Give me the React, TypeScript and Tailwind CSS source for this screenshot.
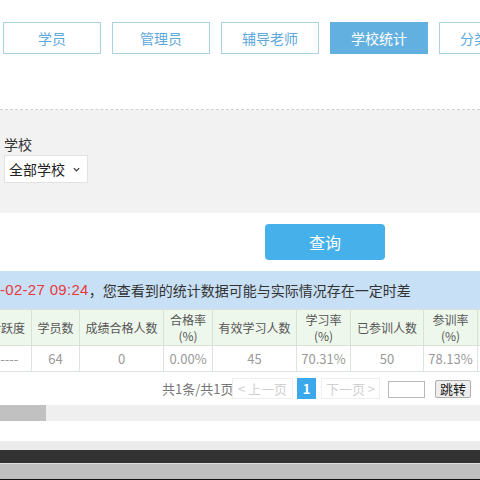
const TABS = ["学员", "管理员", "辅导老师", "学校统计", "分类统计"];

const HEADERS: { label: string; sub?: string; w: string }[] = [
  { label: "活跃度", w: "w-[49px]" },
  { label: "学员数", w: "w-[48px]" },
  { label: "成绩合格人数", w: "w-[84px]" },
  { label: "合格率", sub: "(%)", w: "w-[49px]" },
  { label: "有效学习人数", w: "w-[84px]" },
  { label: "学习率", sub: "(%)", w: "w-[54px]" },
  { label: "已参训人数", w: "w-[73px]" },
  { label: "参训率", sub: "(%)", w: "w-[54px]" },
  { label: "结业人数", w: "w-[80px]" },
];

const ROW = ["-----", "64", "0", "0.00%", "45", "70.31%", "50", "78.13%", ""];

export default function App() {
  return (
    <div
      className="w-[480px] h-[480px] overflow-hidden bg-white flex flex-col"
      style={{ fontFamily: '"Noto Sans CJK SC", "Liberation Sans", sans-serif' }}
    >
      {/* Tabs */}
      <div className="h-[110px] shrink-0 border-b border-dashed border-[#cfcfcf] pt-[22px] pl-[3px]">
        <div className="flex gap-[11px] w-[600px]">
          {TABS.map((t, i) => (
            <div
              key={t}
              className={
                i === 3
                  ? "w-[98px] h-[32px] shrink-0 flex items-center justify-center bg-[#62b0e0] border border-[#62b0e0] text-white text-[14px]"
                  : "w-[98px] h-[32px] shrink-0 flex items-center justify-center bg-white border border-[#a9d2e7] text-[#5da8dc] text-[14px]"
              }
            >
              {t}
            </div>
          ))}
        </div>
      </div>

      {/* Filter */}
      <div className="h-[103px] shrink-0 bg-[#f2f2f2] pl-[4px] pt-[24px]">
        <div className="text-[14px] leading-[20px] text-[#333]">学校</div>
        <div className="mt-[1px] w-[84px] h-[28px] bg-white border border-[#e2e2e2] flex items-center pl-[4px] pr-[6px] text-[14px] text-[#222]">
          <span className="flex-1">全部学校</span>
          <svg width="9" height="9" viewBox="0 0 10 10" fill="none" stroke="#333" strokeWidth="1.3">
            <path d="M2 3.5 L5 6.5 L8 3.5" />
          </svg>
        </div>
      </div>

      {/* Query */}
      <div className="h-[58px] shrink-0 pt-[11px] pl-[265px]">
        <button className="w-[120px] h-[36px] rounded-[4px] bg-[#45b0ea] text-white text-[16px]">查询</button>
      </div>

      {/* Notice */}
      <div className="h-[38px] shrink-0 bg-[#c8e0f5] flex items-center text-[14px] whitespace-nowrap">
        <span className="text-[#e8383d] text-[15px] tracking-[0.3px]" style={{ fontFamily: '"Liberation Sans", sans-serif' }}>
          -02-27 09:24
        </span>
        <span className="text-[#333]">，您查看到的统计数据可能与实际情况存在一定时差</span>
      </div>

      {/* Table */}
      <div className="shrink-0 -ml-[18px]">
        <table className="border-collapse table-fixed w-[575px] text-[12px]">
          <thead>
            <tr className="h-[36px] bg-[#eef7ec]">
              {HEADERS.map((h) => (
                <th key={h.label} className={`${h.w} border border-[#d6e3d4] font-normal text-[#555] leading-[16px] p-0`}>
                  {h.label}
                  {h.sub && <br />}
                  {h.sub}
                </th>
              ))}
            </tr>
          </thead>
          <tbody>
            <tr className="h-[26px]">
              {ROW.map((v, i) => (
                <td key={i} className="border border-[#dde3dd] text-center text-[13px] text-[#999] p-0">
                  {v}
                </td>
              ))}
            </tr>
          </tbody>
        </table>
      </div>

      {/* Pagination */}
      <div className="h-[33px] shrink-0 flex items-center pl-[162px] text-[13px] whitespace-nowrap">
        <span className="text-[#777] w-[70px]">共1条/共1页</span>
        <span className="w-[61px] h-[21px] border border-[#eeeeee] flex items-center justify-center text-[#d0d0d0]">&lt; 上一页</span>
        <span className="ml-[4px] w-[19px] h-[21px] bg-[#3aa8ea] text-white font-bold flex items-center justify-center">1</span>
        <span className="ml-[5px] w-[59px] h-[21px] border border-[#eeeeee] flex items-center justify-center text-[#d0d0d0]">下一页 &gt;</span>
        <span className="ml-[8px] w-[37px] h-[17px] border border-[#b8b8b8] bg-white mt-[2px]" />
        <span className="ml-[10px] w-[36px] h-[18px] border border-[#adadad] bg-[#eeeeee] rounded-[2px] flex items-center justify-center text-[#222] mt-[1px]">跳转</span>
      </div>

      {/* Scrollbar */}
      <div className="h-[16px] shrink-0 bg-[#efefef]">
        <div className="w-[46px] h-full bg-[#c1c1c1]" />
      </div>

      <div className="h-[20px] shrink-0 bg-white" />
      <div className="h-[9px] shrink-0 bg-[#ebebeb]" />
      <div className="h-[13px] shrink-0 bg-[#333333]" />
      <div className="h-[1px] shrink-0 bg-[#dedede]" />
      <div className="h-[15px] shrink-0 bg-[#c0c0c0]" />
      <div className="flex-1 bg-[#111]" />
    </div>
  );
}
